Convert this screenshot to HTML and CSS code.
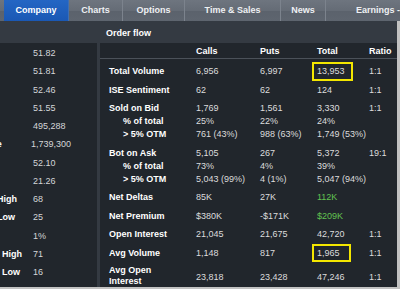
FILE: index.html
```html
<!DOCTYPE html>
<html>
<head>
<meta charset="utf-8">
<link rel="stylesheet" href="styles.css">
</head>
<body>
<div class="window">
  <nav class="tabs">
    <div class="tab active">Company</div>
    <div class="tab">Charts</div>
    <div class="tab">Options</div>
    <div class="tab">Time &amp; Sales</div>
    <div class="tab">News</div>
    <div class="tab last">Earnings -</div>
  </nav>
  <div class="main">
    <div class="head"></div>
    <div class="head"><span class="title">Order flow</span></div>
    <div class="left">
      <div class="lrow"><span class="lval">51.82</span></div>
      <div class="lrow"><span class="lval">51.81</span></div>
      <div class="lrow"><span class="lval">52.46</span></div>
      <div class="lrow"><span class="lval">51.55</span></div>
      <div class="lrow"><span class="lval">495,288</span></div>
      <div class="lrow"><span class="llbl cut-far">Volume</span><span class="lval">1,739,300</span></div>
      <div class="lrow"><span class="lval">52.10</span></div>
      <div class="lrow"><span class="lval">21.26</span></div>
      <div class="lrow"><span class="llbl cut">High</span><span class="lval">68</span></div>
      <div class="lrow"><span class="llbl cut">Low</span><span class="lval">25</span></div>
      <div class="lrow"><span class="lval">1%</span></div>
      <div class="lrow"><span class="llbl">High</span><span class="lval">71</span></div>
      <div class="lrow"><span class="llbl">Low</span><span class="lval">16</span></div>
    </div>
    <div class="right">
      <div class="row header">
        <span></span><span>Calls</span><span>Puts</span><span>Total</span><span>Ratio</span>
      </div>
      <div class="body">
        <div class="group">
          <div class="row"><span class="lbl">Total Volume</span><span>6,956</span><span>6,997</span><span class="hl hl-a">13,953</span><span>1:1</span></div>
        </div>
        <div class="group">
          <div class="row"><span class="lbl">ISE Sentiment</span><span>62</span><span>62</span><span>124</span><span>1:1</span></div>
        </div>
        <div class="group">
          <div class="row"><span class="lbl">Sold on Bid</span><span>1,769</span><span>1,561</span><span>3,330</span><span>1:1</span></div>
          <div class="row"><span class="lbl sub">% of total</span><span>25%</span><span>22%</span><span>24%</span><span></span></div>
          <div class="row"><span class="lbl sub">&gt; 5% OTM</span><span>761 (43%)</span><span>988 (63%)</span><span>1,749 (53%)</span><span></span></div>
        </div>
        <div class="group">
          <div class="row"><span class="lbl">Bot on Ask</span><span>5,105</span><span>267</span><span>5,372</span><span>19:1</span></div>
          <div class="row"><span class="lbl sub">% of total</span><span>73%</span><span>4%</span><span>39%</span><span></span></div>
          <div class="row"><span class="lbl sub">&gt; 5% OTM</span><span>5,043 (99%)</span><span>4 (1%)</span><span>5,047 (94%)</span><span></span></div>
        </div>
        <div class="group">
          <div class="row"><span class="lbl">Net Deltas</span><span>85K</span><span>27K</span><span class="green">112K</span><span></span></div>
        </div>
        <div class="group">
          <div class="row"><span class="lbl">Net Premium</span><span>$380K</span><span>-$171K</span><span class="green">$209K</span><span></span></div>
        </div>
        <div class="group">
          <div class="row"><span class="lbl">Open Interest</span><span>21,045</span><span>21,675</span><span>42,720</span><span>1:1</span></div>
        </div>
        <div class="group">
          <div class="row"><span class="lbl">Avg Volume</span><span>1,148</span><span>817</span><span class="hl hl-b">1,965</span><span>1:1</span></div>
        </div>
        <div class="group">
          <div class="row tall"><span class="lbl two">Avg Open<br>Interest</span><span>23,818</span><span>23,428</span><span>47,246</span><span>1:1</span></div>
        </div>
      </div>
    </div>
  </div>
</div>
</body>
</html>
```
FILE: styles.css
```css
html, body {
  margin: 0;
  padding: 0;
}
body {
  width: 400px;
  height: 289px;
  overflow: hidden;
  background: #c2c2c2;
  font-family: "Liberation Sans", Arial, sans-serif;
  font-size: 9px;
  color: #dcdcdc;
}
.window {
  width: 400px;
  height: 285px;
  display: flex;
  flex-direction: column;
}
.tabs {
  height: 21px;
  flex: none;
  display: grid;
  grid-template-columns: 65px 54px 62px 96px 45px 104px;
  padding-left: 4px;
  background: linear-gradient(#6e757f 0%, #656c76 50%, #5b626c 52%, #5e656f 100%);
  overflow: hidden;
  width: 400px;
  box-sizing: border-box;
}
.tab {
  border-right: 1px solid #7c838d;
  text-align: center;
  line-height: 21px;
  font-weight: bold;
  color: #eef0f3;
  white-space: nowrap;
}
.tab.active {
  background: linear-gradient(#2466c4, #1a58b4);
  border-right-color: #3d6fb5;
  color: #ffffff;
}
.tab.last {
  border-right: none;
}
.main {
  flex: 1;
  width: 397px;
  background: #343a42;
  display: grid;
  grid-template-columns: 97px 297px;
  grid-template-rows: 22px 1fr;
  column-gap: 3px;
}
.head {
  display: flex;
  align-items: center;
}
.title {
  font-weight: bold;
  color: #ffffff;
  padding-left: 6px;
  padding-top: 2px;
}
.left {
  background: #21262c;
  overflow: hidden;
  padding-top: 4px;
  display: flex;
  flex-direction: column;
  gap: 6.25px;
}
.lrow {
  line-height: 12px;
  height: 12px;
  position: relative;
  display: flex;
}
.llbl {
  width: 31px;
  padding-left: 2px;
  flex: none;
  font-weight: bold;
  color: #ffffff;
  white-space: nowrap;
}
.llbl.cut {
  margin-left: -5px;
  width: 36px;
}
.llbl.cut-far {
  margin-left: -30px;
  width: 61px;
  padding-left: 0;
  text-align: left;
}
.lval {
  margin-left: 33px;
  color: #d4d6d8;
}
.llbl + .lval {
  margin-left: 0;
}
.right {
  background: #21262c;
  padding-top: 2px;
}
.row {
  display: grid;
  grid-template-columns: 87px 64px 57px 52px 28px;
  padding-left: 9px;
  line-height: 12px;
  white-space: nowrap;
}
.row.header {
  font-weight: bold;
  color: #ffffff;
  padding-bottom: 1px;
  border-bottom: 1px solid #4b5159;
}
.body {
  padding-top: 6px;
  display: flex;
  flex-direction: column;
  gap: 6.5px;
}
.group {
  display: flex;
  flex-direction: column;
  gap: 1px;
}
.lbl {
  font-weight: bold;
  color: #ffffff;
}
.lbl.sub {
  padding-left: 14px;
}
.lbl.two {
  line-height: 11px;
}
.row.tall > span:not(.lbl) {
  margin-top: 6px;
}
.green {
  color: #62c251;
}
.hl {
  position: relative;
}
.hl::after {
  content: "";
  position: absolute;
  left: -5px;
  top: -3px;
  border: 2px solid #f3e600;
}
.hl-a::after {
  width: 37px;
  height: 15px;
}
.hl-b::after {
  width: 35px;
  height: 14px;
}
```
